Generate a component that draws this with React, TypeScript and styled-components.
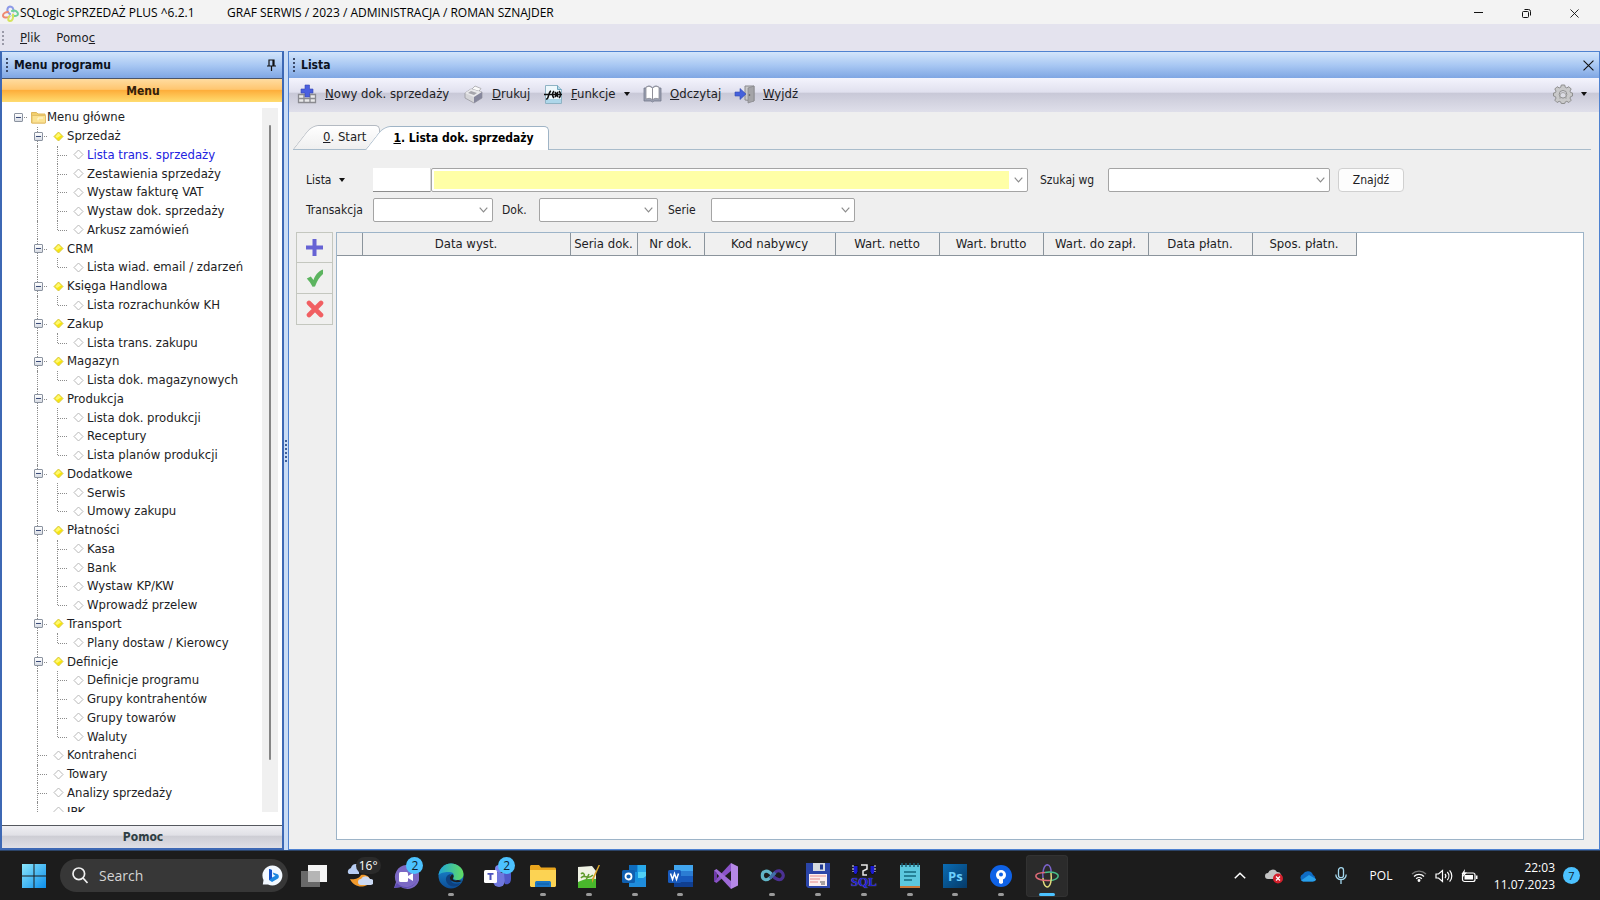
import React from 'react';
import styled, { createGlobalStyle, css } from 'styled-components';

const uiFont = '"DejaVu Sans Condensed", "DejaVu Sans", sans-serif';
const sysFont = '"Open Sans", "Noto Sans", sans-serif';

const Global = createGlobalStyle`
  * { box-sizing: border-box; }
  body { margin: 0; background: #efefef; font: 12px/18px ${uiFont}; color: #1d1d24; overflow: hidden; }
  button, input, select { font: inherit; color: inherit; margin: 0; }
  button { padding: 0; border: 0; background: none; }
  a { color: inherit; text-decoration: none; }
  svg { display: block; flex: none; }
`;

const Page = styled.div`
  height: 100vh;
  display: flex;
  flex-direction: column;
`;

const TitleBar = styled.header`
  height: 24px;
  flex: none;
  display: flex;
  align-items: center;
  background: #f3f3f3;
  color: #000;
  font: 12px/24px ${sysFont};
  padding: 2px 2px 0 2px;
`;
const TitleText = styled.span<{ $w?: number }>`
  white-space: nowrap;
  margin-left: 1px;
  ${p => p.$w && css`width: ${p.$w}px;`}
`;
const WindowButtons = styled.div`
  margin-left: auto;
  display: flex;
`;
const WindowButton = styled.button`
  width: 48px;
  height: 22px;
  display: grid;
  place-items: center;
`;

const MenuBar = styled.nav`
  height: 27px;
  flex: none;
  display: flex;
  align-items: center;
  gap: 16px;
  padding-left: 2px;
  background: #e4e3ee;
  font-size: 13px;
`;
const Grip = styled.span<{ $h: number; $color?: string }>`
  width: 2px;
  height: ${p => p.$h}px;
  flex: none;
  background: repeating-linear-gradient(${p => p.$color || '#3c4a68'} 0 2px, transparent 2px 4px);
`;

const Workspace = styled.main`
  flex: 1;
  min-height: 0;
  display: flex;
  background: #c9dcf6;
  border-bottom: 1px solid #2c4468;
`;

const Side = styled.aside`
  width: 284px;
  flex: none;
  display: flex;
  flex-direction: column;
  background: #fff;
  border: 2px solid #3d68b4;
  border-top: 1px solid #4a7ac6;
`;
const PanelHead = styled.div`
  height: 26px;
  flex: none;
  display: flex;
  align-items: center;
  gap: 6px;
  padding: 0 5px 0 4px;
  background: linear-gradient(#d3e5fb, #a9c8f3 50%, #7fa6e3);
  font-weight: bold;
  color: #0c1220;
`;
const HeadButton = styled.button`
  margin-left: auto;
  display: grid;
  place-items: center;
`;
const BarButton = styled.button<{ $active?: boolean }>`
  flex: none;
  height: ${p => (p.$active ? 24 : 23)}px;
  font-weight: bold;
  padding-left: 2px;
  ${p => p.$active
    ? css`
      border-top: 1px solid #4b5568;
      background: linear-gradient(#ffdca0, #ffc670 45%, #fdae3b 50%, #ffdc70);
      color: #33200a;`
    : css`
      border-top: 1px solid #55585e;
      background: linear-gradient(#efeff3, #e0e0e6 42%, #cdcdd4 46%, #dfdfe6);
      color: #2f3f44;`}
`;
const TreeFrame = styled.div`
  flex: 1;
  min-height: 0;
  display: flex;
  padding: 6px 4px 13px 6px;
`;
const TreeClip = styled.div`
  flex: 1;
  overflow: hidden;
`;
const Tree = styled.ul`
  list-style: none;
  margin: 0;
  padding: 0;
  height: 713px;
  display: grid;
  grid-auto-rows: 1fr;
  font-size: 13px;
`;
const TreeRow = styled.li`
  display: flex;
  align-items: stretch;
  min-height: 0;
`;
const TreeLink = styled.a<{ $current?: boolean }>`
  align-self: center;
  margin-left: -1px;
  white-space: nowrap;
  color: ${p => (p.$current ? '#2222e0' : '#1d1d24')};
`;
const TreeCell = styled.span<{ $v?: 'full' | 'top'; $h?: boolean }>`
  width: 20px;
  flex: none;
  position: relative;
  display: grid;
  place-items: center;
  &::before {
    content: '';
    display: ${p => (p.$v ? 'block' : 'none')};
    position: absolute;
    left: 9px;
    top: 0;
    bottom: ${p => (p.$v === 'top' ? '50%' : '0')};
    border-left: 1px dotted #8c8c8c;
  }
  &::after {
    content: '';
    display: ${p => (p.$h ? 'block' : 'none')};
    position: absolute;
    left: 10px;
    width: 9px;
    top: 50%;
    border-top: 1px dotted #8c8c8c;
  }
`;
const Expander = styled.button`
  position: relative;
  z-index: 1;
  width: 9px;
  height: 9px;
  border: 1px solid #8b93a0;
  border-radius: 1px;
  background: linear-gradient(#fff, #d8dce4);
  display: grid;
  place-items: center;
  &::before { content: ''; width: 5px; height: 1px; background: #3a4b78; }
`;
const Track = styled.div`
  width: 16px;
  background: #f0f0f0;
  display: flex;
  justify-content: center;
  padding: 17px 0 52px;
`;
const Thumb = styled.div`
  width: 2px;
  background: #868686;
  border-radius: 1px;
`;

const Splitter = styled.div`
  width: 4px;
  flex: none;
  display: grid;
  place-items: center;
`;

const Main = styled.section`
  flex: 1;
  min-width: 0;
  display: flex;
  flex-direction: column;
  background: #efefef;
  border: 1px solid #4f82d0;
`;
const ToolBar = styled.div`
  height: 34px;
  flex: none;
  display: flex;
  align-items: center;
  padding: 0 12px 2px 8px;
  background: linear-gradient(#f4f4fd, #e0e0ee 42%, #c8c8d7 44%, #dfdfea);
  font-size: 13px;
`;
const Tool = styled.button<{ $w: number }>`
  display: flex;
  align-items: center;
  gap: 8px;
  width: ${p => p.$w}px;
  white-space: nowrap;
`;
const Settings = styled.button`
  margin-left: auto;
  display: flex;
  align-items: center;
  gap: 8px;
`;
const Caret = styled.span`
  border: 3px solid transparent;
  border-top: 4px solid #111;
  border-bottom: 0;
`;

const Tabs = styled.div`
  flex: none;
  display: flex;
  align-items: flex-end;
  margin: 13px 8px 0 4px;
  height: 25px;
  border-bottom: 1px solid #a9bccb;
`;
const Tab = styled.button<{ $active?: boolean }>`
  position: relative;
  z-index: ${p => (p.$active ? 1 : 0)};
  height: 24px;
  margin-bottom: ${p => (p.$active ? '-1px' : '0')};
  padding: 0 ${p => (p.$active ? '15px 0 28px' : '14px 0 30px')};
  & + & { margin-left: -15px; }
  font-size: ${p => (p.$active ? 12 : 13)}px;
  font-weight: ${p => (p.$active ? 'bold' : 'normal')};
  color: ${p => (p.$active ? '#000' : '#1d1d24')};
  &::before, &::after {
    content: '';
    position: absolute;
    z-index: -1;
    top: 0;
    bottom: 0;
    border: 0 solid ${p => (p.$active ? '#9fb4c6' : '#b4bac2')};
    background: ${p => (p.$active ? '#fff' : 'linear-gradient(#fff, #efefef)')};
  }
  &::before {
    left: 0;
    width: 34px;
    border-width: 1px 0 0 1px;
    border-radius: 7px 0 0 0;
    transform: skewX(-38deg);
    transform-origin: 0 100%;
  }
  &::after {
    left: 30px;
    right: 0;
    border-width: 1px 1px 0 0;
    border-radius: 0 5px 0 0;
  }
`;

const Form = styled.form`
  flex: none;
  display: flex;
  flex-direction: column;
  gap: 6px;
  padding: 18px 0 0 17px;
`;
const FormRow = styled.div`
  display: flex;
  align-items: center;
`;
const Label = styled.label<{ $w: number }>`
  width: ${p => p.$w}px;
  flex: none;
  display: flex;
  align-items: center;
  gap: 8px;
  white-space: nowrap;
`;
const CodeInput = styled.input`
  width: 58px;
  height: 24px;
  border: 0;
  border-bottom: 1px solid #8c8c8c;
  border-right: 1px solid #d8d8d8;
  background: #fff;
`;
const Combo = styled.div<{ $w: number; $gap?: number }>`
  position: relative;
  width: ${p => p.$w}px;
  margin-right: ${p => p.$gap || 0}px;
  svg { position: absolute; right: 5px; top: 9px; pointer-events: none; }
`;
const Select = styled.select<{ $yellow?: boolean }>`
  appearance: none;
  display: block;
  width: 100%;
  height: 24px;
  border: 1px solid #a4a4a4;
  border-radius: 2px;
  padding: 2px 18px 2px 2px;
  background: ${p => (p.$yellow ? 'linear-gradient(#ffffa6, #ffffa6) content-box, #fff' : '#fff')};
`;
const FindButton = styled.button`
  width: 66px;
  height: 24px;
  border: 1px solid #d0d0d0;
  border-radius: 4px;
  background: #fdfdfd;
`;

const Content = styled.div`
  flex: 1;
  min-height: 0;
  display: flex;
  align-items: stretch;
  gap: 3px;
  padding: 10px 15px 9px 7px;
`;
const RowButtons = styled.div`
  width: 37px;
  flex: none;
  display: flex;
  flex-direction: column;
`;
const RowButton = styled.button`
  height: 31px;
  border: 1px solid #c4c7bf;
  background: #f0f0ef;
  display: grid;
  place-items: center;
  & + & { border-top: 0; }
`;
const GridFrame = styled.div`
  flex: 1;
  min-width: 0;
  overflow: hidden;
  background: #fff;
  border: 1px solid #9db4c8;
`;
const Table = styled.table`
  table-layout: fixed;
  width: 1019px;
  border-collapse: collapse;
  font-size: 13px;
  th {
    height: 22px;
    padding: 0;
    font-weight: normal;
    white-space: nowrap;
    background: #f0f0f0;
    border-right: 1px solid #8b949c;
    border-bottom: 1px solid #8b949c;
  }
`;

const TaskBar = styled.footer`
  height: 49px;
  flex: none;
  display: flex;
  align-items: center;
  background: #1c1c1c;
  color: #fff;
  font-family: ${sysFont};
  padding: 0 20px 0 22px;
`;
const StartButton = styled.button`
  width: 38px;
`;
const SearchBox = styled.div`
  width: 228px;
  height: 33px;
  display: flex;
  align-items: center;
  gap: 11px;
  padding: 0 5px 0 12px;
  border-radius: 17px;
  background: #373737;
  input {
    flex: 1;
    min-width: 0;
    padding: 0;
    border: 0;
    background: none;
    font-size: 14px;
    &::placeholder { color: #d4d4d4; opacity: 1; }
  }
`;
const Apps = styled.div`
  width: 779px;
  margin-left: 3px;
  display: grid;
  grid-auto-flow: column;
  grid-auto-columns: 1fr;
`;
const AppButton = styled.button<{ $state?: 'run' | 'active' }>`
  position: relative;
  height: 42px;
  margin: 0 2px;
  border-radius: 4px;
  display: grid;
  place-items: center;
  ${p => p.$state === 'active' && css`background: #2b2b2b; box-shadow: inset 0 0 0 1px #323232;`}
  &::after {
    content: '';
    display: ${p => (p.$state ? 'block' : 'none')};
    position: absolute;
    bottom: 1px;
    left: 50%;
    transform: translateX(-50%);
    width: ${p => (p.$state === 'active' ? 16 : 6)}px;
    height: 3px;
    border-radius: 2px;
    background: ${p => (p.$state === 'active' ? '#4cc2ff' : '#9a9a9a')};
  }
`;
const Badge = styled.span<{ $dark?: boolean }>`
  position: absolute;
  top: 2px;
  right: ${p => (p.$dark ? 0 : 3)}px;
  width: ${p => (p.$dark ? 25 : 17)}px;
  height: 17px;
  border-radius: 9px;
  background: ${p => (p.$dark ? '#2a2a2a' : '#4cc2ff')};
  color: ${p => (p.$dark ? '#fff' : '#10222e')};
  font-size: 12px;
  line-height: 17px;
  text-align: center;
`;
const Tray = styled.div`
  margin-left: auto;
  display: flex;
  align-items: center;
  font-size: 12px;
`;
const TrayItem = styled.button<{ $w: number }>`
  width: ${p => p.$w}px;
  height: 40px;
  display: grid;
  place-items: center;
`;
const Clock = styled.div`
  width: 72px;
  text-align: right;
  font-size: 12px;
  line-height: 17px;
  margin-right: 8px;
`;
const Notice = styled.span`
  width: 17px;
  height: 17px;
  border-radius: 9px;
  background: #4cc2ff;
  color: #10222e;
  font-size: 11px;
  line-height: 17px;
  text-align: center;
`;

const Chevron = () => (
  <svg width="9" height="6" viewBox="0 0 9 6" fill="none" stroke="#8c8c8c" strokeWidth="1.2"><path d="M.7.7 4.5 4.8 8.3.7" /></svg>
);

const Logo = ({ size }: { size: number }) => (
  <svg width={size} height={size} viewBox="0 0 24 24" fill="none" strokeWidth="1.5">
    <path d="M8 14C7 8 9 1 12.500.8 15 1 16.500 5 16 9" stroke="#7a62c9" />
    <path d="M10 8.500c6-1.500 13 .5 13.200 3.500 0 2.500-4 4.500-8 4.500" stroke="#49c08a" />
    <path d="M16 9c1 7-.5 13.500-3.500 14C9.500 23 8 18 8 14" stroke="#e3dc7c" />
    <path d="M15 16.500C7 17 1 15 .8 12c0-2 4-3.300 9.200-3.500" stroke="#dd6b78" />
  </svg>
);

const BigLogo = () => (
  <svg width="17" height="17" viewBox="0 0 17 17" fill="none" strokeWidth="2" strokeLinecap="round">
    <path d="M8 9C4 7 5 2 8 1.500c2.500 0 3.500 2 3.500 5" stroke="#8d9ae8" />
    <path d="M7.500 11.500C5 13 1 13 1 10.500 1 8.500 3.500 7 6 7" stroke="#ee8a72" />
    <path d="M10 6c3-1.500 6 1 6 3s-3 2.500-5.500 1.500" stroke="#6fd09a" />
    <path d="M11 9.500c.5 3.500-.5 6.500-3 6.500s-2-3-.5-5" stroke="#d5e35b" />
  </svg>
);

const Diamond = ({ on }: { on?: boolean }) => (
  <svg width="11" height="11" viewBox="0 0 11 11">
    <path d="M5.500 1 10 5.500 5.500 10 1 5.500z" fill={on ? '#f7e60c' : '#fff'} stroke={on ? '#d8c84a' : '#b8b8b8'} />
    {on && <path d="M5.500 2 8 4.500 4 7 2.300 5.500z" fill="#fff870" />}
  </svg>
);

const Folder = () => (
  <svg width="15" height="13" viewBox="0 0 15 13">
    <path d="M.5 12V1.500h5l1.500 1.500h7v9z" fill="#f2cf6c" stroke="#deb75c" />
    <path d="M1 12V4.500h13.500V12z" fill="#fbe291" stroke="#e3bf6a" />
    <path d="M7 9.500V7h5" stroke="#fff8dc" fill="none" />
  </svg>
);

const GridPlus = () => (
  <svg width="20" height="20" viewBox="0 0 20 20">
    <path d="M1.500 10.500h17v8h-17zM1.500 14.500h17M7 10.500v8M13 10.500v8" fill="#e9e9ea" stroke="#8a8a90" strokeWidth="1.300" />
    <path d="M8 1h4.500v4H16v4h-3.500v4H8V9H4V5h4z" fill="#4a5fe0" stroke="#3646b4" strokeWidth=".6" />
  </svg>
);
const Printer = () => (
  <svg width="20" height="19" viewBox="0 0 20 19">
    <path d="m7 5 4-4 6 2.500-3 4z" fill="#fafafa" stroke="#a5a5a8" strokeWidth=".8" />
    <path d="M1 8 7 4l11 3v6l-8 5-9-5z" fill="#d5d5d8" stroke="#98989e" strokeWidth=".8" />
    <path d="m1 8 6-4 11 3-8 5z" fill="#e9e9eb" />
    <path d="m10 12 8-5v6l-8 5z" fill="#86879c" />
    <path d="m7 6 6 2-3 2-6-2z" fill="#a6a6ac" />
  </svg>
);
const FxPage = () => (
  <svg width="19" height="19" viewBox="0 0 19 19">
    <path d="M1.500.5h12l4 4v14h-16z" fill="#eef8fc" stroke="#8fb3c4" />
    <path d="M2 14h15v4H2z" fill="#aed7ea" />
    <path d="M13.500.5v4h4" fill="#b8d8e6" stroke="#6fa7c0" />
    <path d="M2 14c3 1 2-7 5-8M0 9.500h18M10 6c-2 2-2 5 0 7M15 6c2 2 2 5 0 7M11 7l3 5M14 7l-3 5" fill="none" stroke="#111" strokeWidth="1.500" />
  </svg>
);
const Book = () => (
  <svg width="19" height="18" viewBox="0 0 19 18">
    <path d="M1 3h2v-.5C5.500 0 8 1 9.500 3 11 1 13.500 0 16 2.500V3h2v13h-7l-1.500 1L8 16H1z" fill="#9aa0b2" stroke="#74798c" strokeWidth=".8" />
    <path d="M3 2.500C5.500.5 8 1.500 9.500 3.500V15C8 13 5.500 13 3 14zM16 2.500C13.500.5 11 1.500 9.500 3.500V15c1.500-2 4-2 6.500-1z" fill="#fff" stroke="#8c8c94" strokeWidth=".8" />
  </svg>
);
const Exit = () => (
  <svg width="21" height="19" viewBox="0 0 21 19">
    <path d="M11 1h9v15l-9-1z" fill="#c9c9cb" stroke="#8a8a8e" />
    <path d="m14 3 6-2v15l-6 2z" fill="#a4a4a8" stroke="#87878b" strokeWidth=".7" />
    <circle cx="15.500" cy="10" r=".8" fill="#555" />
    <path d="M1 7h5V3.500l6 5.500-6 5.500V11H1z" fill="#4561dc" stroke="#3449b0" strokeWidth=".6" />
  </svg>
);
const Gear = () => (
  <svg width="20" height="20" viewBox="0 0 20 20" stroke="#8e8e8e">
    <path d="M8.300 1h3.400l.6 2.300 1.500.6 2.100-1.200 2.300 2.300-1.200 2.100.6 1.500 1.900.4v3l-1.900.6-.6 1.500 1.200 2.100-2.300 2.300-2.100-1.200-1.500.6-.6 1.600H8.300l-.6-1.600-1.500-.6-2.100 1.200-2.300-2.300L3 14.100l-.6-1.500L.5 12V9l1.900-.4L3 7.100 1.800 5l2.300-2.300 2.100 1.200 1.500-.6z" fill="#c9c9ca" />
    <circle cx="10" cy="10.300" r="3.800" fill="#dcdce4" />
    <path d="M7 15v-3.500a3 3 0 0 1 6 0V15" fill="none" stroke="#a5a5a5" />
  </svg>
);
const Pin = () => (
  <svg width="11" height="12" viewBox="0 0 11 12" fill="none" stroke="#111" strokeWidth="1.200">
    <path d="M3 7V1h5v6M1 7h9M5.500 7v5M7 1v6" />
  </svg>
);
const Cross = ({ size }: { size: number }) => (
  <svg width={size} height={size} viewBox="0 0 10 10" stroke="#111" fill="none"><path d="m.5.5 9 9M9.500.5l-9 9" /></svg>
);

const PlusIcon = () => (
  <svg width="17" height="17" viewBox="0 0 17 17"><path d="M6.500 0h4v6.500H17v4h-6.500V17h-4v-6.500H0v-4h6.500z" fill="#6663d4" /></svg>
);
const CheckIcon = () => (
  <svg width="18" height="18" viewBox="0 0 18 18"><path d="m.8 9.500 4-2L7.500 11C9 6.500 12 2.500 17 .5v4.500c-3.500 3-6 7-8 12.500l-2.500.3C5 14.500 3 12 .8 9.500z" fill="#5cb45f" /></svg>
);
const DeleteIcon = () => (
  <svg width="18" height="18" viewBox="0 0 18 18"><path d="m3 3 12 12M15 3 3 15" stroke="#f15f62" strokeWidth="4.600" strokeLinecap="round" /></svg>
);

const StartIcon = () => (
  <svg width="24" height="24" viewBox="0 0 24 24">
    <defs><linearGradient id="win" x1="0" y1="0" x2="1" y2="1"><stop offset="0" stopColor="#8ae6fc" /><stop offset="1" stopColor="#0c8eea" /></linearGradient></defs>
    <path d="M0 0h11.500v11.500H0zM12.500 0H24v11.500H12.500zM0 12.500h11.500V24H0zM12.500 12.500H24V24H12.500z" fill="url(#win)" />
  </svg>
);
const SearchIcon = () => (
  <svg width="16" height="17" viewBox="0 0 16 17" fill="none" stroke="#f0f0f0" strokeWidth="1.700"><circle cx="6.800" cy="6.800" r="5.800" /><path d="m11 11 4.500 5" /></svg>
);
const BingIcon = () => (
  <svg width="21" height="21" viewBox="0 0 21 21">
    <path d="M10.500.5a10 10 0 1 1-4.500 19H.8L1.500 15A10 10 0 0 1 10.500.5z" fill="#f2f8ff" />
    <path d="M7 4l3 1v7.500l3.500-1.800-1.800-.9-1-2.400 5 1.800c1.300.6 1.700 3.200.3 4.300L10 17l-3-2z" fill="#1c86e0" />
    <path d="M7 4l3 1v8l-3 2z" fill="#1450c8" />
  </svg>
);

const TaskView = () => (
  <svg width="26" height="24" viewBox="0 0 26 24">
    <path d="M7 1h19v17H7z" fill="#f4f4f4" />
    <path d="M0 7h19v16H0z" fill="#777" fillOpacity=".85" />
    <path d="M7 7h12v11H7z" fill="#b5b5b5" />
  </svg>
);
const Weather = () => (
  <svg width="26" height="26" viewBox="0 0 26 26">
    <path d="M1 10a4 4 0 0 1 3-5 5 5 0 0 1 8-3v9H2z" fill="#b8cdf2" />
    <path d="M3 16c3 1 9 0 11-4 5-1 10 2 9 7-2 5-15 8-20-3z" fill="#f29a2c" />
    <path d="M14 22a3 3 0 0 1 0-6 5 5 0 0 1 9 0 3 3 0 0 1 1 6z" fill="#ccdaf4" />
  </svg>
);
const Chat = () => (
  <svg width="26" height="26" viewBox="0 0 26 26">
    <path d="M13 2a12 12 0 1 1-5 22l-7 1 2-6A12 12 0 0 1 13 2z" fill="#7b68c4" />
    <path d="M4 20a12 12 0 0 0 20-3 12 12 0 0 1-16 7l-7 1z" fill="#5e4db2" />
    <rect x="6" y="9" width="9" height="10" rx="1.500" fill="#fff" /><path d="m15 13 5-3v8l-5-3z" fill="#fff" />
  </svg>
);
const Edge = () => (
  <svg width="26" height="26" viewBox="0 0 26 26">
    <defs>
      <linearGradient id="e1" x1="0" y1="0" x2="1" y2="0"><stop offset="0" stopColor="#1fa6d8" /><stop offset="1" stopColor="#62dc62" /></linearGradient>
      <linearGradient id="e2" x1="0" y1="0" x2="0" y2="1"><stop offset="0" stopColor="#1b8fd6" /><stop offset="1" stopColor="#0c4d96" /></linearGradient>
    </defs>
    <circle cx="13" cy="13" r="12.500" fill="url(#e2)" />
    <path d="M.5 12C1.500 5 7 .5 13 .5S25.500 5 25.500 11c0 4-3 6-6 6s-5-1-4-3c1-2 0-5-4-5S4 9 .5 12z" fill="url(#e1)" />
    <path d="M13 17c0 3 4 5 10 3-2 2-3 2-4 3-7 2-12-3-11-8 1-3 3-4 5-4-1 2-1 4 0 6z" fill="#0e417f" />
    <path d="M14 11c2 1 2 3 1 4-1 2 2 3 5 2l4 1c-6 3-13 0-12-4z" fill="#1c1c1c" />
  </svg>
);
const Teams = () => (
  <svg width="27" height="24" viewBox="0 0 27 24">
    <circle cx="15" cy="5" r="4" fill="#7b83eb" /><path d="M9 9h12v8a6 6 0 0 1-12 0z" fill="#6f77dd" />
    <path d="M20 9h7v6c0 4-3 6-6 5z" fill="#5059c9" /><circle cx="23" cy="6" r="2.500" fill="#5059c9" />
    <rect x="0" y="6" width="13" height="13" rx="1.500" fill="#fff" />
    <path d="M3.500 9h6v1.800H7.500V16h-2v-5.200h-2z" fill="#4b53bc" />
  </svg>
);
const Explorer = () => (
  <svg width="26" height="24" viewBox="0 0 26 24">
    <path d="M0 2.500C0 1.700.7 1 1.500 1H9l2 2.500h13.500c.8 0 1.500.7 1.500 1.500v17H0z" fill="#e9a51d" />
    <path d="M0 6h26v15.500c0 .8-.7 1.500-1.500 1.500h-23C.7 23 0 22.300 0 21.500z" fill="#fcd353" />
    <path d="M5 23v-4.500c0-1 1-1.500 2-1.500h12c1 0 2 .5 2 1.500V23z" fill="#1a76c4" /><path d="M7 20h12" stroke="#0c5aa0" />
  </svg>
);
const NotePlus = () => (
  <svg width="24" height="26" viewBox="0 0 24 26">
    <path d="m1 4 14-1 4 5v17H1z" fill="#eff2e4" />
    <path d="M1 19c5-3 12-4 18-3v9H1z" fill="#49b82c" />
    <path d="M4 11c2-2 4 0 3 2M4 15c4-5 6 3 12-3M9 17l3-6" stroke="#5e9a2c" strokeWidth="1.600" fill="none" />
    <path d="m23 2-7 16-1 2v-4L21.500 2z" fill="#d8a42a" />
  </svg>
);
const Outlook = () => (
  <svg width="25" height="24" viewBox="0 0 25 24">
    <path d="M7 1h17v21H7z" fill="#1490df" /><path d="M7 1h8v7H7z" fill="#0f6cbd" /><path d="M16 1h8v7h-8z" fill="#28a8ea" /><path d="M16 8h8v6h-8z" fill="#50d0f5" />
    <path d="m7 12 9 6 8-6v11H7z" fill="#1f8ddd" />
    <rect x="0" y="6" width="13" height="13" rx="1.500" fill="#0f5fb0" /><circle cx="6.500" cy="12.500" r="3" fill="none" stroke="#fff" strokeWidth="1.800" />
  </svg>
);
const Word = () => (
  <svg width="25" height="24" viewBox="0 0 25 24">
    <path d="M6 1h19v6H6z" fill="#41a5ee" /><path d="M6 7h19v5H6z" fill="#2b7cd3" /><path d="M6 12h19v6H6z" fill="#185abd" /><path d="M6 18h19v5H6z" fill="#103f91" />
    <rect x="0" y="6" width="13" height="13" rx="1.500" fill="#185abd" /><path d="m2.500 9.500 2 6 2-6 2 6 2-6" fill="none" stroke="#fff" strokeWidth="1.500" />
  </svg>
);
const VStudio = () => (
  <svg width="26" height="26" viewBox="0 0 26 26">
    <path d="M18 0v26l7-3.500v-19z" fill="#b588e6" /><path d="M18 0 1 18.500 3.500 20 18 8z" fill="#8a52c8" />
    <path d="M18 26 1 7.500 3.500 6 18 18z" fill="#9f6bd8" /><path d="M1 7.500v11L4 16V10z" fill="#6d3aa8" />
  </svg>
);
const Loop = () => (
  <svg width="25" height="15" viewBox="0 0 26 16" fill="none" strokeWidth="3.400">
    <path d="M13 8c-3-4-5-5-7.500-4.500C1 4.500 1 11.500 5.500 12.500 9 13 10 10 13 8" stroke="#62b6c8" />
    <path d="M13 8c2-3 4.500-5.500 7.500-5s4 4 4 5-1 4.500-4 4.500-5.500-2-7.500-4.500" stroke="#4b3193" />
    <path d="m10 11 6-6" stroke="#4070a8" />
  </svg>
);
const Floppy = () => (
  <svg width="24" height="25" viewBox="0 0 24 25">
    <path d="M0 0h24v25H2l-2-2z" fill="#2b45a8" /><path d="M7 0h12v8H7z" fill="#d6dae0" /><path d="M14 1.500h3v5h-3z" fill="#223a90" />
    <path d="M3 11h18v12H3z" fill="#fbeeee" /><path d="M4 13h16M4 16h10M4 19h8" stroke="#e48a8a" /><path d="M14 19h5M15 21h4" stroke="#555" />
  </svg>
);
const SqlText = styled.span`
  display: flex;
  flex-direction: column;
  align-items: center;
  font: bold 13px/12px "Liberation Serif", serif;
  color: #1c1cd0;
  text-shadow: 0 0 1px #a0a0ff;
`;
const Sql = () => (
  <SqlText>
    <svg width="24" height="12" viewBox="0 0 24 12">
      <path d="M1 1.500h5v6l-1.500 3h-2L1 7.500zM18 1.500h5v6l-1.500 3h-2L18 7.500z" fill="#1a1ad0" stroke="#111" />
      <path d="M1 1v7M23 1v7" stroke="#e8e8e8" strokeDasharray="2 1" />
      <path d="M9 1h6v4l-4 2v4h4" fill="none" stroke="#e8e8e8" strokeWidth="1.500" />
    </svg>
    SQL
  </SqlText>
);
const Notepad = () => (
  <svg width="20" height="26" viewBox="0 0 20 26">
    <path d="M0 2h20v22H0z" fill="#5cc8de" /><path d="M0 23h20v2H0z" fill="#c9793a" />
    <path d="M2 0v4M6 0v4M10 0v4M14 0v4M18 0v4" stroke="#1c5f74" strokeWidth="1.500" />
    <path d="M4 9h12M4 13h12M4 17h8" stroke="#15697f" strokeWidth="1.600" />
  </svg>
);
const PsBox = styled.span`
  width: 24px;
  height: 24px;
  background: linear-gradient(135deg, #0a6cb4, #053a68);
  color: #6cd0ff;
  font: bold 13px/24px ${sysFont};
  text-align: center;
`;
const Lock = () => (
  <svg width="22" height="22" viewBox="0 0 22 22"><circle cx="11" cy="11" r="11" fill="#0f62e6" /><circle cx="11" cy="10" r="5" fill="#fff" /><path d="M9 12h4v6l-2 1-2-1z" fill="#fff" /><circle cx="11" cy="9.500" r="2" fill="#0f62e6" /></svg>
);

const apps: { name: string; icon: React.ReactNode; state?: 'run' | 'active'; badge?: string; dark?: boolean }[] = [
  { name: 'Task view', icon: <TaskView /> },
  { name: 'Weather', icon: <Weather />, badge: '16°', dark: true },
  { name: 'Chat', icon: <Chat />, badge: '2' },
  { name: 'Edge', icon: <Edge />, state: 'run' },
  { name: 'Teams', icon: <Teams />, badge: '2' },
  { name: 'Explorer', icon: <Explorer />, state: 'run' },
  { name: 'Notepad++', icon: <NotePlus />, state: 'run' },
  { name: 'Outlook', icon: <Outlook />, state: 'run' },
  { name: 'Word', icon: <Word />, state: 'run' },
  { name: 'Visual Studio', icon: <VStudio /> },
  { name: 'Dev tools', icon: <Loop />, state: 'run' },
  { name: 'Commander', icon: <Floppy />, state: 'run' },
  { name: 'SQL', icon: <Sql />, state: 'run' },
  { name: 'Notepad', icon: <Notepad />, state: 'run' },
  { name: 'Photoshop', icon: <PsBox>Ps</PsBox>, state: 'run' },
  { name: 'Password manager', icon: <Lock />, state: 'run' },
  { name: 'SQLogic', icon: <Logo size={24} />, state: 'active' },
];

const menu: [string, string[]][] = [
  ['Sprzedaż', ['Lista trans. sprzedaży', 'Zestawienia sprzedaży', 'Wystaw fakturę VAT', 'Wystaw dok. sprzedaży', 'Arkusz zamówień']],
  ['CRM', ['Lista wiad. email / zdarzeń']],
  ['Księga Handlowa', ['Lista rozrachunków KH']],
  ['Zakup', ['Lista trans. zakupu']],
  ['Magazyn', ['Lista dok. magazynowych']],
  ['Produkcja', ['Lista dok. produkcji', 'Receptury', 'Lista planów produkcji']],
  ['Dodatkowe', ['Serwis', 'Umowy zakupu']],
  ['Płatności', ['Kasa', 'Bank', 'Wystaw KP/KW', 'Wprowadź przelew']],
  ['Transport', ['Plany dostaw / Kierowcy']],
  ['Definicje', ['Definicje programu', 'Grupy kontrahentów', 'Grupy towarów', 'Waluty']],
  ['Kontrahenci', []],
  ['Towary', []],
  ['Analizy sprzedaży', []],
  ['JPK', []],
];

const columns: [string, number][] = [
  ['', 25], ['Data wyst.', 208], ['Seria dok.', 67], ['Nr dok.', 67], ['Kod nabywcy', 131], ['Wart. netto', 104],
  ['Wart. brutto', 104], ['Wart. do zapł.', 105], ['Data płatn.', 104], ['Spos. płatn.', 104],
];

function MenuTree() {
  return (
    <Tree>
      <TreeRow>
        <TreeCell $h><Expander aria-label="Zwiń Menu główne" /></TreeCell>
        <TreeCell><Folder /></TreeCell>
        <TreeLink href="#menu">Menu główne</TreeLink>
      </TreeRow>
      {menu.map(([group, items], g) => (
        <React.Fragment key={group}>
          <TreeRow>
            <TreeCell />
            <TreeCell $v={g === menu.length - 1 ? 'top' : 'full'} $h>
              {items.length > 0 && <Expander aria-label={`Zwiń ${group}`} />}
            </TreeCell>
            <TreeCell><Diamond on={items.length > 0} /></TreeCell>
            <TreeLink href="#group">{group}</TreeLink>
          </TreeRow>
          {items.map((item, i) => (
            <TreeRow key={item}>
              <TreeCell />
              <TreeCell $v="full" />
              <TreeCell $v={i === items.length - 1 ? 'top' : 'full'} $h />
              <TreeCell><Diamond /></TreeCell>
              <TreeLink href="#item" $current={g === 0 && i === 0}>{item}</TreeLink>
            </TreeRow>
          ))}
        </React.Fragment>
      ))}
    </Tree>
  );
}

function ComboBox({ id, w, gap, yellow }: { id: string; w: number; gap?: number; yellow?: boolean }) {
  return (
    <Combo $w={w} $gap={gap}>
      <Select id={id} $yellow={yellow}><option value="" /></Select>
      <Chevron />
    </Combo>
  );
}

export default function App() {
  return (
    <Page>
      <Global />
      <TitleBar>
        <BigLogo />
        <TitleText $w={206}>SQLogic SPRZEDAŻ PLUS ^6.2.1</TitleText>
        <TitleText>GRAF SERWIS / 2023 / ADMINISTRACJA / ROMAN SZNAJDER</TitleText>
        <WindowButtons>
          <WindowButton aria-label="Minimalizuj"><svg width="9" height="2" viewBox="0 0 9 2"><path d="M0 .5h9" stroke="#111" /></svg></WindowButton>
          <WindowButton aria-label="Przywróć">
            <svg width="9" height="9" viewBox="0 0 9 9" fill="none" stroke="#111"><rect x=".5" y="2.500" width="6" height="6" rx="1" /><path d="M2.500.5h4a2 2 0 0 1 2 2v4" /></svg>
          </WindowButton>
          <WindowButton aria-label="Zamknij"><Cross size={9} /></WindowButton>
        </WindowButtons>
      </TitleBar>
      <MenuBar>
        <Grip $h={14} $color="#9a9aa8" />
        <a href="#plik"><u>P</u>lik</a>
        <a href="#pomoc">Pomo<u>c</u></a>
      </MenuBar>
      <Workspace>
        <Side>
          <PanelHead><Grip $h={14} />Menu programu<HeadButton aria-label="Przypnij"><Pin /></HeadButton></PanelHead>
          <BarButton $active>Menu</BarButton>
          <TreeFrame>
            <TreeClip><MenuTree /></TreeClip>
            <Track><Thumb /></Track>
          </TreeFrame>
          <BarButton>Pomoc</BarButton>
        </Side>
        <Splitter><Grip $h={22} $color="#3f5f9a" /></Splitter>
        <Main>
          <PanelHead><Grip $h={14} />Lista<HeadButton aria-label="Zamknij listę"><Cross size={11} /></HeadButton></PanelHead>
          <ToolBar>
            <Tool $w={167}><GridPlus /><span><u>N</u>owy dok. sprzedaży</span></Tool>
            <Tool $w={80}><Printer /><span><u>D</u>rukuj</span></Tool>
            <Tool $w={99}><FxPage /><span><u>F</u>unkcje</span><Caret /></Tool>
            <Tool $w={91}><Book /><span><u>O</u>dczytaj</span></Tool>
            <Tool $w={80}><Exit /><span><u>W</u>yjdź</span></Tool>
            <Settings aria-label="Ustawienia"><Gear /><Caret /></Settings>
          </ToolBar>
          <Tabs>
            <Tab><u>0</u>. Start</Tab>
            <Tab $active><u>1</u>. Lista dok. sprzedaży</Tab>
          </Tabs>
          <Form>
            <FormRow>
              <Label $w={67} htmlFor="lista">Lista<Caret /></Label>
              <CodeInput aria-label="Kod listy" />
              <ComboBox id="lista" w={597} gap={12} yellow />
              <Label $w={68} htmlFor="szukaj">Szukaj wg</Label>
              <ComboBox id="szukaj" w={222} gap={8} />
              <FindButton type="button">Znajdź</FindButton>
            </FormRow>
            <FormRow>
              <Label $w={67} htmlFor="transakcja">Transakcja</Label>
              <ComboBox id="transakcja" w={120} gap={9} />
              <Label $w={37} htmlFor="dok">Dok.</Label>
              <ComboBox id="dok" w={119} gap={10} />
              <Label $w={43} htmlFor="serie">Serie</Label>
              <ComboBox id="serie" w={144} />
            </FormRow>
          </Form>
          <Content>
            <RowButtons>
              <RowButton aria-label="Dodaj"><PlusIcon /></RowButton>
              <RowButton aria-label="Zatwierdź"><CheckIcon /></RowButton>
              <RowButton aria-label="Usuń"><DeleteIcon /></RowButton>
            </RowButtons>
            <GridFrame>
              <Table>
                <colgroup>{columns.map(([name, w]) => <col key={name} width={w} />)}</colgroup>
                <thead><tr>{columns.map(([name]) => <th key={name}>{name}</th>)}</tr></thead>
              </Table>
            </GridFrame>
          </Content>
        </Main>
      </Workspace>
      <TaskBar>
        <StartButton aria-label="Start"><StartIcon /></StartButton>
        <SearchBox><SearchIcon /><input aria-label="Search" placeholder="Search" /><BingIcon /></SearchBox>
        <Apps>
          {apps.map(a => (
            <AppButton key={a.name} $state={a.state} aria-label={a.name}>
              {a.icon}
              {a.badge && <Badge $dark={a.dark}>{a.badge}</Badge>}
            </AppButton>
          ))}
        </Apps>
        <Tray>
          <TrayItem $w={34} aria-label="Ukryte ikony"><svg width="12" height="7" viewBox="0 0 12 7" fill="none" stroke="#fff" strokeWidth="1.500"><path d="m.8 6.200 5.200-5 5.200 5" /></svg></TrayItem>
          <TrayItem $w={34} aria-label="Chmura">
            <svg width="18" height="16" viewBox="0 0 18 16"><path d="M3 11a3 3 0 0 1 0-6 5 5 0 0 1 9-1 4 4 0 0 1 3 7z" fill="#c4c4c4" /><circle cx="13" cy="10.500" r="5" fill="#d3202c" /><path d="m11 8.500 4 4m0-4-4 4" stroke="#fff" strokeWidth="1.200" /></svg>
          </TrayItem>
          <TrayItem $w={33} aria-label="OneDrive">
            <svg width="18" height="12" viewBox="0 0 18 12"><path d="M4 11.500a4 4 0 0 1 0-7.500 5.500 5.500 0 0 1 10 1 3.500 3.500 0 0 1 0 6.500z" fill="#0f6cc4" /><path d="M2 10.500 10 5l7 4c0 1.500-1 2.500-3 2.500H4z" fill="#29a0ea" /></svg>
          </TrayItem>
          <TrayItem $w={34} aria-label="Mikrofon">
            <svg width="12" height="17" viewBox="0 0 12 17" fill="none" stroke="#a4d8ee" strokeWidth="1.300"><rect x="3.500" y=".7" width="5" height="10" rx="2.500" /><path d="M.8 7.500a5.200 5.200 0 0 0 10.400 0M6 13v4" /></svg>
          </TrayItem>
          <TrayItem $w={46}>POL</TrayItem>
          <TrayItem $w={29} aria-label="Wi-Fi">
            <svg width="16" height="13" viewBox="0 0 16 13" fill="none" stroke="#fff" strokeWidth="1.300"><path d="M1 5a10 10 0 0 1 14 0" stroke="#777" /><path d="M3 7.500a7 7 0 0 1 10 0M5.200 9.800a4 4 0 0 1 5.600 0" /><circle cx="8" cy="11.500" r=".8" fill="#fff" /></svg>
          </TrayItem>
          <TrayItem $w={22} aria-label="Głośność">
            <svg width="18" height="14" viewBox="0 0 18 14" fill="none" stroke="#fff" strokeWidth="1.200"><path d="M1 5h2.500L7.500 1.500v11L3.500 9H1zM10 5a3 3 0 0 1 0 4M12.300 3a6 6 0 0 1 0 8M14.600 1.300a8.500 8.500 0 0 1 0 11.400" /></svg>
          </TrayItem>
          <TrayItem $w={28} aria-label="Bateria">
            <svg width="17" height="14" viewBox="0 0 17 14"><rect x="1.500" y="4" width="12.500" height="8.500" rx="2" fill="none" stroke="#fff" strokeWidth="1.200" /><rect x="3.500" y="6" width="8.500" height="4.500" fill="#fff" /><path d="M15 6.500h1.500v3.500H15z" fill="#fff" /><path d="M4 0 .5 5h2L1.500 8.500 6 3.500H3.500z" fill="#fff" /></svg>
          </TrayItem>
          <Clock>22:03<br />11.07.2023</Clock>
          <Notice>7</Notice>
        </Tray>
      </TaskBar>
    </Page>
  );
}
